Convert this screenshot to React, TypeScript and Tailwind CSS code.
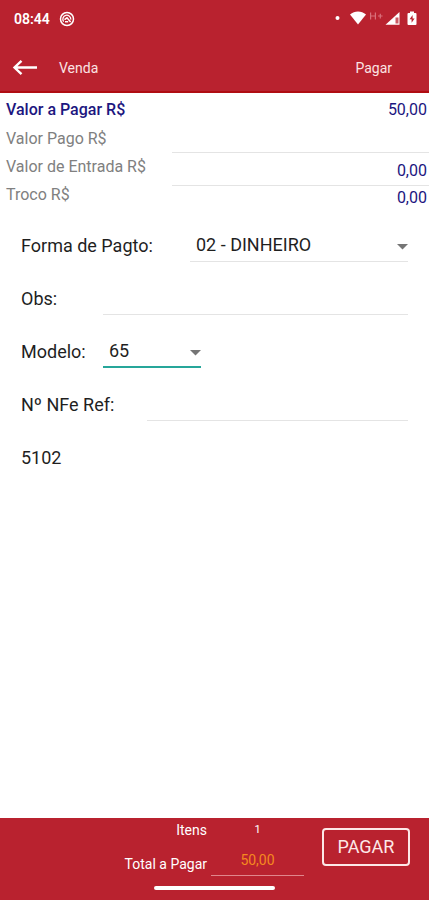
import { useState } from 'react'

const lineInput = 'min-w-0 bg-transparent border-b border-[#e4e4e4] outline-none'

const StatusBar = () => (
  <div className="flex h-[38px] items-center justify-between pl-[14px] pr-3 text-white">
    <div className="flex items-center gap-[9px]">
      <span className="text-sm font-semibold">08:44</span>
      <svg className="h-4 w-4" viewBox="0 0 16 16" fill="none" stroke="currentColor">
        <circle cx="8" cy="8" r="6.5" strokeWidth="1.5" />
        <path d="M4.6 10.600A4 4 0 1 1 11.800 8.600" strokeWidth="1.3" />
        <path d="M5.500 8.600 8 6.800l3.600 4.200M6 10.800h3.200" strokeWidth="1.5" />
      </svg>
    </div>
    <div className="flex items-center">
      <svg className="h-5 w-[84px]" viewBox="0 0 84 20" fill="currentColor">
        <circle cx="4.5" cy="9" r="2" />
        <path d="M17 5.400c4.700-4 11.300-4 16 0L25 15.500z" />
        <g fill="none" stroke="#d9707a" strokeWidth="1.2">
          <path d="M37.600 3.500v7M42.400 3.500v7M37.600 7h4.800M45 7h4.600M47.300 4.800v4.600" />
        </g>
        <path d="M52.500 15.800 66.500 3v12.800z" />
        <path d="M62.500 8.500h3v6h-3z" fill="#b9222f" opacity=".75" />
        <path d="M75.500 4H77V2.500h4V4h1.500q1 0 1 1v10q0 1-1 1h-7q-1 0-1-1V5q0-1 1-1z" />
        <path d="m79.600 6-3 4.300h2v3.400l3-4.300h-2z" fill="#b9222f" />
      </svg>
    </div>
  </div>
)

const Header = () => (
  <header className="bg-[#b9222f] border-b-2 border-[#b00d12]">
    <StatusBar />
    <div className="flex h-[53px] items-center pb-px pl-3 pr-[37px] pt-2 text-sm text-[#fbe3e3]">
      <button type="button" aria-label="Voltar" className="mr-[21px]">
        <svg className="h-5 w-[26px] text-white" viewBox="0 0 26 20" fill="none" stroke="currentColor" strokeWidth="2.4">
          <path d="M25 9.500H2.500M9.500 2.800 2.500 9.500l7 6.700" />
        </svg>
      </button>
      <h1>Venda</h1>
      <button type="button" className="ml-auto">
        Pagar
      </button>
    </div>
  </header>
)

const Summary = () => (
  <section className="flex pt-[2px] text-base text-[#808080]">
    <div className="flex w-2/5 flex-col pl-[6px]">
      <span className="flex h-[29px] items-center font-medium text-[#1c1680]">Valor a Pagar R$</span>
      <label htmlFor="pago" className="flex h-[29px] items-center">
        Valor Pago R$
      </label>
      <label htmlFor="entrada" className="flex h-7 items-center">
        Valor de Entrada R$
      </label>
      <span className="flex h-7 items-center">Troco R$</span>
    </div>
    <div className="flex flex-1 flex-col text-right text-[#1c1680]">
      <span className="flex h-[29px] items-center justify-end pr-[2px]">50,00</span>
      <input id="pago" className={`${lineInput} h-[29px] pr-[2px] text-right`} />
      <input id="entrada" defaultValue="0,00" className={`${lineInput} h-[33px] pr-[2px] pt-[2px] text-right`} />
      <span className="flex h-6 items-center justify-end pr-[2px]">0,00</span>
    </div>
  </section>
)

interface SelectProps {
  id: string
  options: string[]
  className: string
}

const Select = ({ id, options, className }: SelectProps) => {
  const [value, setValue] = useState(options[0])

  return (
    <div className={`relative h-8 ${className}`}>
      <select
        id={id}
        value={value}
        onChange={(e) => setValue(e.target.value)}
        className="h-full w-full appearance-none bg-transparent pl-[6px] pr-5 outline-none"
      >
        {options.map((option) => (
          <option key={option}>{option}</option>
        ))}
      </select>
      <svg
        className="pointer-events-none absolute right-0 top-[14px] h-[6px] w-[11px]"
        viewBox="0 0 11 6"
        fill="#757575"
      >
        <path d="M0 0h11L5.500 5.500z" />
      </svg>
    </div>
  )
}

const PaymentForm = () => (
  <form className="flex flex-col px-[21px] pt-[9px] text-lg text-[#1f1f1f]">
    <div className="flex h-[53px] items-center">
      <label htmlFor="forma" className="w-[169px]">
        Forma de Pagto:
      </label>
      <Select
        id="forma"
        options={['02 - DINHEIRO']}
        className="flex-1 border-b border-[#e4e4e4]"
      />
    </div>
    <div className="flex h-[53px] items-center">
      <label htmlFor="obs" className="w-[82px]">
        Obs:
      </label>
      <input id="obs" className={`${lineInput} h-8 flex-1`} />
    </div>
    <div className="flex h-[53px] items-center">
      <label htmlFor="modelo" className="w-[82px]">
        Modelo:
      </label>
      <Select id="modelo" options={['65']} className="w-[98px] border-b-2 border-[#26a69a]" />
    </div>
    <div className="flex h-[53px] items-center">
      <label htmlFor="nfe" className="w-[126px]">
        Nº NFe Ref:
      </label>
      <input id="nfe" className={`${lineInput} h-8 flex-1`} />
    </div>
    <p className="flex h-[53px] items-center">5102</p>
  </form>
)

const Footer = () => (
  <footer className="mt-auto flex flex-col bg-[#b9222f] pb-[10px] text-sm text-white">
    <div className="flex justify-end pr-[19px]">
      <div className="mr-1 flex flex-col items-end">
        <span className="flex h-6 items-center">Itens</span>
        <label htmlFor="total" className="flex h-11 items-center">
          Total a Pagar
        </label>
      </div>
      <div className="mr-[18px] flex w-[93px] flex-col">
        <span className="flex h-6 items-center justify-center text-[11px]">1</span>
        <input
          id="total"
          readOnly
          value="50,00"
          className="mt-[2px] h-8 w-full border-b border-[#e0868c] bg-transparent text-center text-[#f5891f] outline-none"
        />
      </div>
      <button
        type="button"
        className="mt-[10px] h-[38px] w-[88px] rounded-sm border-2 border-[#fde8e8] text-lg text-[#fde8e8]"
      >
        PAGAR
      </button>
    </div>
    <div className="h-1 w-[121px] self-center rounded-full bg-white" />
  </footer>
)

const App = () => (
  <div className="flex min-h-screen flex-col bg-white font-[Roboto,sans-serif]">
    <Header />
    <Summary />
    <PaymentForm />
    <Footer />
  </div>
)

export default App
